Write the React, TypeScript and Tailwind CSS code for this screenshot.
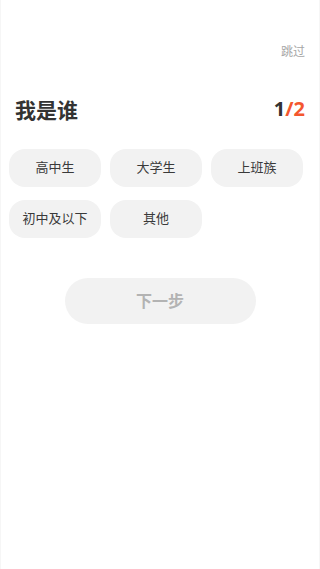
const ROLES = ["高中生", "大学生", "上班族", "初中及以下", "其他"];

export default function App() {
  return (
    <div
      className="h-[569px] w-[320px] bg-white border-x border-[#f6f6f6]"
      style={{ fontFamily: '"Noto Sans", "Noto Sans CJK SC", sans-serif' }}
    >
      <div className="flex justify-end pt-[42px] pr-[14px]">
        <span className="text-[12px] leading-[20px] text-[#a6a6a6]">跳过</span>
      </div>

      <div className="mt-[33px] flex items-end justify-between px-[14px]">
        <h1 className="text-[21px] font-bold leading-[30px] text-[#333]">我是谁</h1>
        <div className="mb-[4px] text-[20px] font-bold leading-[24px]">
          <span className="text-[#333]">1</span>
          <span className="text-[#f4572f]">/2</span>
        </div>
      </div>

      <div className="mt-[24px] flex flex-wrap gap-x-[9px] gap-y-[13px] pl-[8px]">
        {ROLES.map((r) => (
          <button
            key={r}
            className="flex h-[38px] w-[92px] items-center justify-center rounded-[16px] bg-[#f2f2f2] text-[13px] text-[#3a3a3a]"
          >
            {r}
          </button>
        ))}
      </div>

      <div className="mt-[40px] flex justify-center">
        <button className="flex h-[46px] w-[191px] items-center justify-center rounded-full bg-[#f2f2f2] text-[16px] font-bold text-[#b3b3b3]">
          下一步
        </button>
      </div>
    </div>
  );
}
